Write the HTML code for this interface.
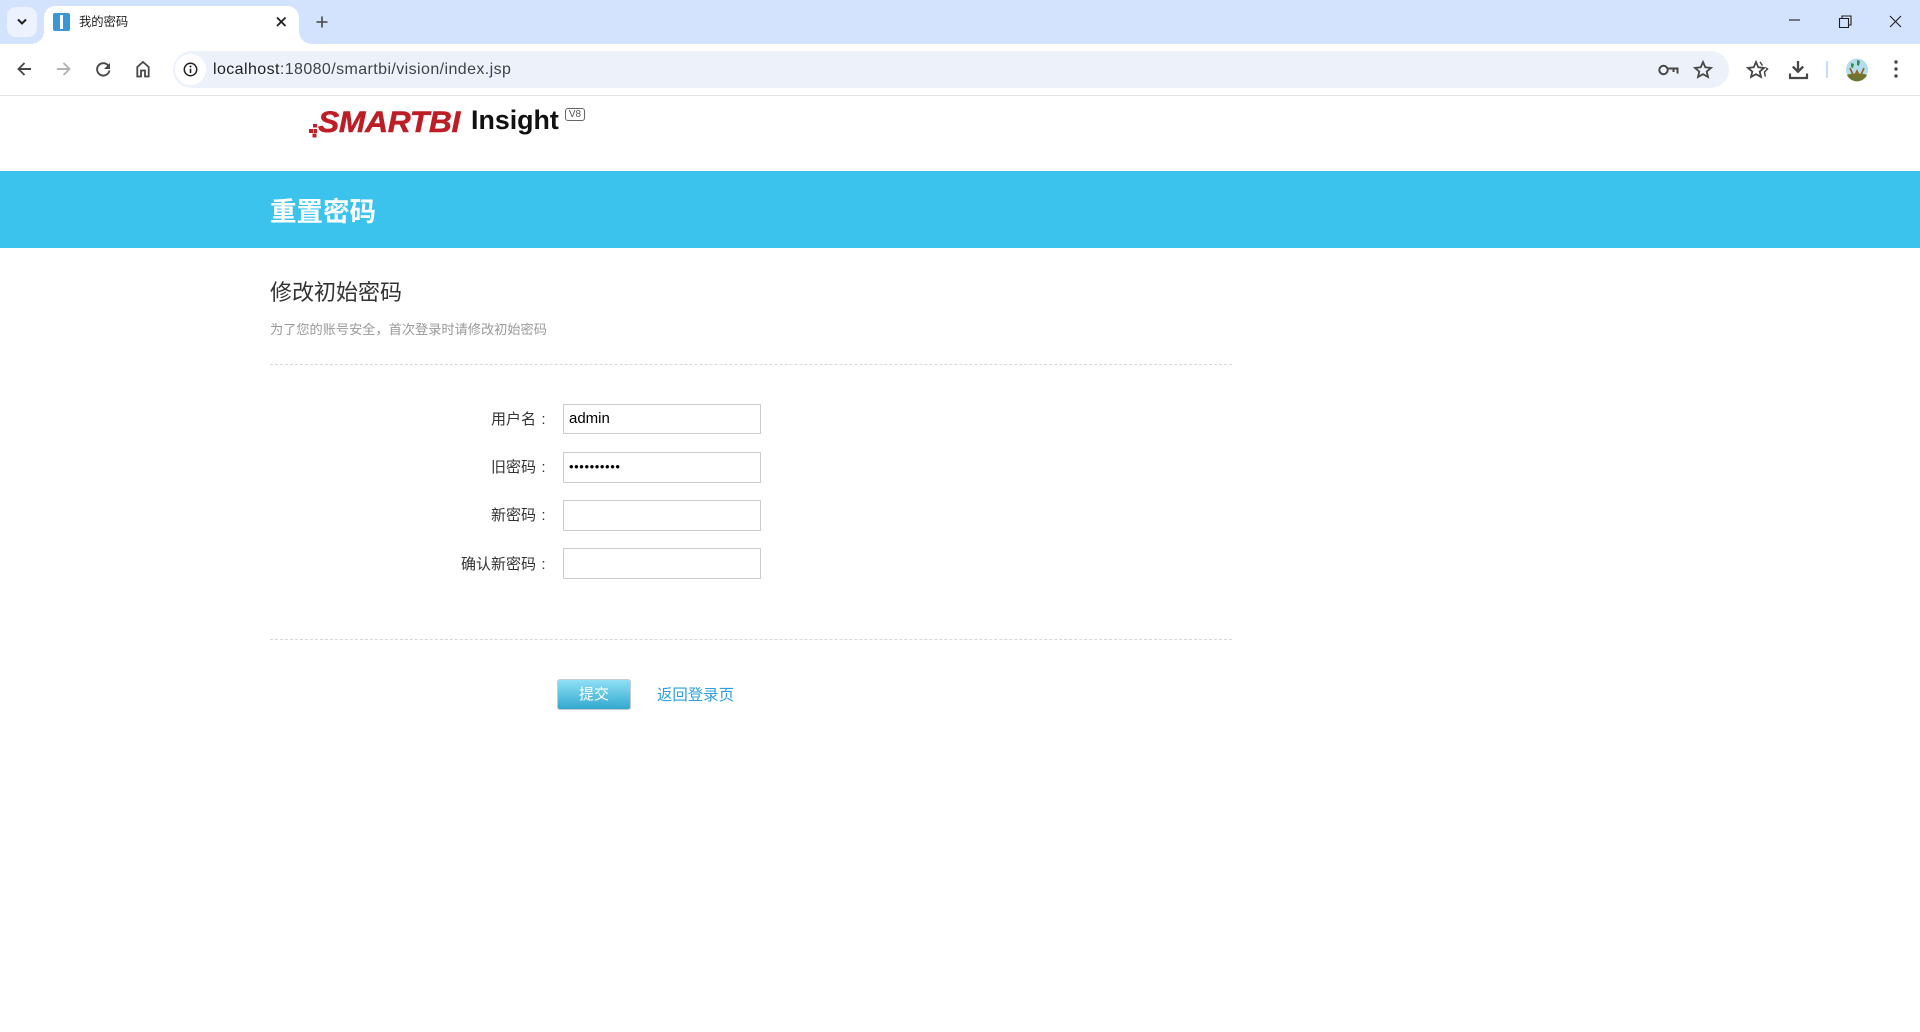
<!DOCTYPE html>
<html lang="zh"><head><meta charset="utf-8"><title>我的密码</title>
<style>
*{box-sizing:border-box}
html,body{margin:0;padding:0;width:1920px;height:1032px;overflow:hidden;background:#fff}
body{position:relative;font-family:"Liberation Sans","Noto Sans CJK SC",sans-serif;color:#333}
.a{position:absolute;white-space:nowrap}
svg{position:absolute;overflow:visible}
.lbl{font-size:15px;color:#333;right:1369px;line-height:20px}
.lbl span{display:inline-block;width:15px;text-align:center}
.inp{position:absolute;left:563px;width:198px;background:#fff;border:1px solid #ccc;font-size:15px;color:#000;padding-left:5px;line-height:28px}
.dash{position:absolute;left:270px;width:962px;height:0;border-top:1px dashed #d8d8d8}
</style></head><body>
<div class="a" style="left:0;top:0;width:1920px;height:44px;background:#d3e3fd"></div>
<div class="a" style="left:0;top:44px;width:1920px;height:51px;background:#fff;border-radius:12px 12px 0 0"></div>
<div class="a" style="left:0;top:95px;width:1920px;height:1px;background:#e3e3e3"></div>
<div class="a" style="left:7px;top:7px;width:30px;height:30px;background:#ecf2fe;border-radius:9px"></div>
<svg style="left:0;top:0" width="40" height="40"><path d="M18 19.500l4 4 4-4" fill="none" stroke="#1f1f1f" stroke-width="2"/></svg>
<svg style="left:30px;top:6px" width="290" height="38"><path d="M0 38c8 0 14-5 14-13V12C14 5 19 0 26 0h231c7 0 12 5 12 12v13c0 8 6 13 14 13z" fill="#fff"/></svg>
<div class="a" style="left:53px;top:13px;width:17px;height:18px;background:#3a97d6;border-radius:2px"></div>
<div class="a" style="left:60px;top:15px;width:3px;height:14px;background:#fff"></div>
<div class="a" style="left:79px;top:13px;font-size:12.300px;line-height:18px;color:#1f1f1f">我的密码</div>
<svg style="left:0;top:0" width="340" height="44"><path d="M277 17.500l8.500 8.500m0-8.500l-8.500 8.500" fill="none" stroke="#1f1f1f" stroke-width="1.800"/><path d="M322 16.500v11m-5.500-5.500h11" fill="none" stroke="#474747" stroke-width="1.600"/></svg>

<svg style="left:0;top:44px" width="160" height="50">
<path d="M31 25H19M24.500 19l-6 6 6 6" fill="none" stroke="#474747" stroke-width="1.900"/>
<path d="M57 25h12M63.500 19l6 6-6 6" fill="none" stroke="#b3b3b3" stroke-width="1.900"/>
<path d="M108.800 22.500a6.200 6.200 0 1 0 .6 4" fill="none" stroke="#474747" stroke-width="1.900"/><path d="M110 19v6h-6z" fill="#474747"/>
<path d="M137.300 32.500V23l5.700-5 5.700 5v9.500h-3.700v-6h-4v6z" fill="none" stroke="#474747" stroke-width="1.800"/>
</svg>

<div class="a" style="left:173px;top:51px;width:1556px;height:37px;background:#edf2fa;border-radius:19px"></div>
<div class="a" style="left:175px;top:54px;width:31px;height:31px;background:#fff;border-radius:50%"></div>
<svg style="left:183px;top:62px" width="16" height="16"><circle cx="7.500" cy="7.500" r="6.200" fill="none" stroke="#1f1f1f" stroke-width="1.500"/><path d="M7.500 6.700v4.300" stroke="#1f1f1f" stroke-width="1.600"/><circle cx="7.500" cy="4.500" r="1" fill="#1f1f1f"/></svg>
<div class="a" style="left:213px;top:59px;font-size:16px;line-height:22px;letter-spacing:.41px;color:#3f4246"><span style="color:#1f1f1f">localhost</span>:18080/smartbi/vision/index.jsp</div>

<svg style="left:1650px;top:55px" width="270" height="32">
<circle cx="13.500" cy="15" r="4.200" fill="none" stroke="#474747" stroke-width="2"/><path d="M18 13.500h9.500v5M23.500 14v3" fill="none" stroke="#474747" stroke-width="2"/>
<path d="M53 7l2.300 5.300 5.700.6-4.300 3.700 1.300 5.400-5-2.800-5 2.800 1.300-5.400-4.300-3.700 5.700-.6z" fill="none" stroke="#474747" stroke-width="1.800"/>
<path d="M106 7l2.300 5.300 5.700.6-4.300 3.700 1.300 5.400-5-2.800-5 2.800 1.300-5.400-4.300-3.700 5.700-.6z" fill="none" stroke="#474747" stroke-width="1.800"/><path d="M110 7l2.500 3.500M116 13l1.500 1-3 3 .8 4.500" fill="none" stroke="#474747" stroke-width="1.500"/>
<path d="M148 6v10.500M142.800 11.500l5.200 5.200 5.200-5.200" fill="none" stroke="#474747" stroke-width="2.300"/><path d="M140 18.500v4.500h17v-4.500" fill="none" stroke="#474747" stroke-width="2.200"/>
<path d="M177 6v17" stroke="#c7dcf7" stroke-width="2"/>
<circle cx="207" cy="14.500" r="11" fill="#b5dcec"/><path d="M197 20c3-2 17-2 20 0a11 11 0 0 1-20 0z" fill="#69762f"/><path d="M200 13l4 9 3-6 3 6 4-9" fill="none" stroke="#8a6a2a" stroke-width="1.700"/><path d="M201 8l3 1-1 4-2-1zM207 5l3 1-1 5-2-1z" fill="#2f8f4a"/>
<circle cx="246" cy="7" r="1.700" fill="#474747"/><circle cx="246" cy="14" r="1.700" fill="#474747"/><circle cx="246" cy="21" r="1.700" fill="#474747"/>
</svg>

<svg style="left:1785px;top:8px" width="135" height="30">
<path d="M4 12h11" stroke="#1f1f1f" stroke-width="1.100"/>
<path d="M54.500 10.500h9v9h-9z" fill="none" stroke="#1f1f1f" stroke-width="1.100"/><path d="M57 10V8h9v9h-2" fill="none" stroke="#1f1f1f" stroke-width="1.100"/>
<path d="M105 8l11 11m0-11l-11 11" fill="none" stroke="#1f1f1f" stroke-width="1.100"/>
</svg>

<!-- logo -->
<svg style="left:0;top:0" width="340" height="150"><path d="M313 124h4v3.500h-4zM309 129h4v4h-4zM313.500 129h3.500v4h-3.500zM312.500 133.500h4v4h-4z" fill="#c01f27"/></svg>
<div class="a" style="left:318px;top:104px;font-size:30px;font-weight:bold;font-style:italic;line-height:38px;color:#bd1e26;letter-spacing:-.3px;transform-origin:0 50%;transform:scaleX(1.060);-webkit-text-stroke:.5px #bd1e26">SMARTBI</div>
<div class="a" style="left:471px;top:102px;font-size:26.800px;font-weight:bold;line-height:36px;color:#111">Insight</div>
<div class="a" style="left:565px;top:108px;width:20px;height:13px;border:1px solid #666;border-radius:3px;font-size:10px;line-height:11px;text-align:center;color:#555">V8</div>

<!-- band -->
<div class="a" style="left:0;top:171px;width:1920px;height:77px;background:#3bc3ee"></div>
<div class="a" style="left:270px;top:194px;font-size:26.500px;font-weight:bold;line-height:36px;color:#fff">重置密码</div>

<div class="a" style="left:270px;top:277px;font-size:22px;line-height:32px;color:#333">修改初始密码</div>
<div class="a" style="left:270px;top:320px;font-size:13.200px;line-height:20px;color:#999">为了您的账号安全，首次登录时请修改初始密码</div>
<div class="dash" style="top:364px"></div>

<div class="a lbl" style="top:410px">用户名<span>:</span></div>
<div class="inp" style="top:404px;height:30px">admin</div>
<div class="a lbl" style="top:458px">旧密码<span>:</span></div>
<div class="inp" style="top:452px;height:31px;letter-spacing:.6px;font-size:13px">••••••••••</div>
<div class="a lbl" style="top:506px">新密码<span>:</span></div>
<div class="inp" style="top:500px;height:31px"></div>
<div class="a lbl" style="top:555px">确认新密码<span>:</span></div>
<div class="inp" style="top:548px;height:31px"></div>

<div class="dash" style="top:639px"></div>
<div class="a" style="left:557px;top:679px;width:74px;height:31px;border:1px solid #c6ccd0;border-radius:3px;background:linear-gradient(#8fe0f5,#32a8cf);color:#fff;font-size:15px;line-height:30px;text-align:center">提交</div>
<div class="a" style="left:657px;top:685px;font-size:15.400px;line-height:21px;color:#2e9fdc">返回登录页</div>
</body></html>
